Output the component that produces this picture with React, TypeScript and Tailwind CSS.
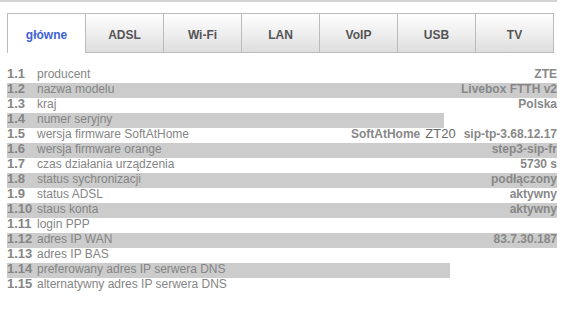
const tabs = ['główne', 'ADSL', 'Wi-Fi', 'LAN', 'VoIP', 'USB', 'TV']

type Row = {
  no: string
  label: string
  value?: React.ReactNode
  bg?: string
}

const rows: Row[] = [
  { no: '1.1', label: 'producent', value: 'ZTE' },
  { no: '1.2', label: 'nazwa modelu', value: 'Livebox FTTH v2', bg: 'bg-[#cccccc]' },
  { no: '1.3', label: 'kraj', value: 'Polska' },
  { no: '1.4', label: 'numer seryjny', bg: 'bg-[linear-gradient(to_right,#cccccc_437px,transparent_437px)]' },
  {
    no: '1.5',
    label: 'wersja firmware SoftAtHome',
    value: (
      <span className="flex items-baseline">
        <span>SoftAtHome</span>
        <span className="ml-[5px] font-normal text-[13px] text-[#6a6a6a]">ZT20</span>
        <span className="ml-[8px]">sip-tp-3.68.12.17</span>
      </span>
    ),
  },
  { no: '1.6', label: 'wersja firmware orange', value: 'step3-sip-fr', bg: 'bg-[#cccccc]' },
  { no: '1.7', label: 'czas działania urządzenia', value: '5730 s' },
  { no: '1.8', label: 'status sychronizacji', value: 'podłączony', bg: 'bg-[#cccccc]' },
  { no: '1.9', label: 'status ADSL', value: 'aktywny' },
  { no: '1.10', label: 'staus konta', value: 'aktywny', bg: 'bg-[#cccccc]' },
  { no: '1.11', label: 'login PPP' },
  { no: '1.12', label: 'adres IP WAN', value: '83.7.30.187', bg: 'bg-[#cccccc]' },
  { no: '1.13', label: 'adres IP BAS' },
  { no: '1.14', label: 'preferowany adres IP serwera DNS', bg: 'bg-[linear-gradient(to_right,#cccccc_443px,transparent_443px)]' },
  { no: '1.15', label: 'alternatywny adres IP serwera DNS' },
]

export default function App() {
  return (
    <div className="w-[564px] h-[321px] bg-white font-['Liberation_Sans',Arial,sans-serif] overflow-hidden">
      {/* linia u góry */}
      <div className="h-[2px] w-[557px] bg-[#d4d4d4]" />

      {/* zakładki */}
      <div className="flex pl-[7px] mt-[11px]">
        {tabs.map((t, i) => {
          const active = i === 0
          return (
            <div
              key={t}
              className={
                active
                  ? 'w-[78px] h-[40px] flex justify-center pt-[15px] border-l border-t border-[#bbbbbb] bg-white text-[12px] leading-none font-bold text-[#3f62d4]'
                  : 'w-[78px] h-[40px] flex justify-center pt-[15px] border-l border-t border-b border-[#bbbbbb] bg-[linear-gradient(to_bottom,#ffffff,#dedede)] text-[12px] leading-none font-bold text-[#555555]' +
                    (i === tabs.length - 1 ? ' w-[79px] border-r' : '')
              }
            >
              {t}
            </div>
          )
        })}
      </div>

      {/* tabela */}
      <div className="mt-[15px] ml-[7px] w-[550px] flex flex-col">
        {rows.map((r) => (
          <div key={r.no} className={'h-[15px] flex items-start justify-between ' + (r.bg ?? '')}>
            <div className="flex items-baseline whitespace-nowrap">
              <span className="min-w-[28px] text-[13px] font-bold text-[#858585] leading-[12px]">{r.no}</span>
              <span className="ml-[2px] text-[12px] text-[#858585] leading-[12px]">{r.label}</span>
            </div>
            {r.value && (
              <span className="text-[12px] font-bold text-[#888888] leading-[12px] whitespace-nowrap">{r.value}</span>
            )}
          </div>
        ))}
      </div>
    </div>
  )
}
